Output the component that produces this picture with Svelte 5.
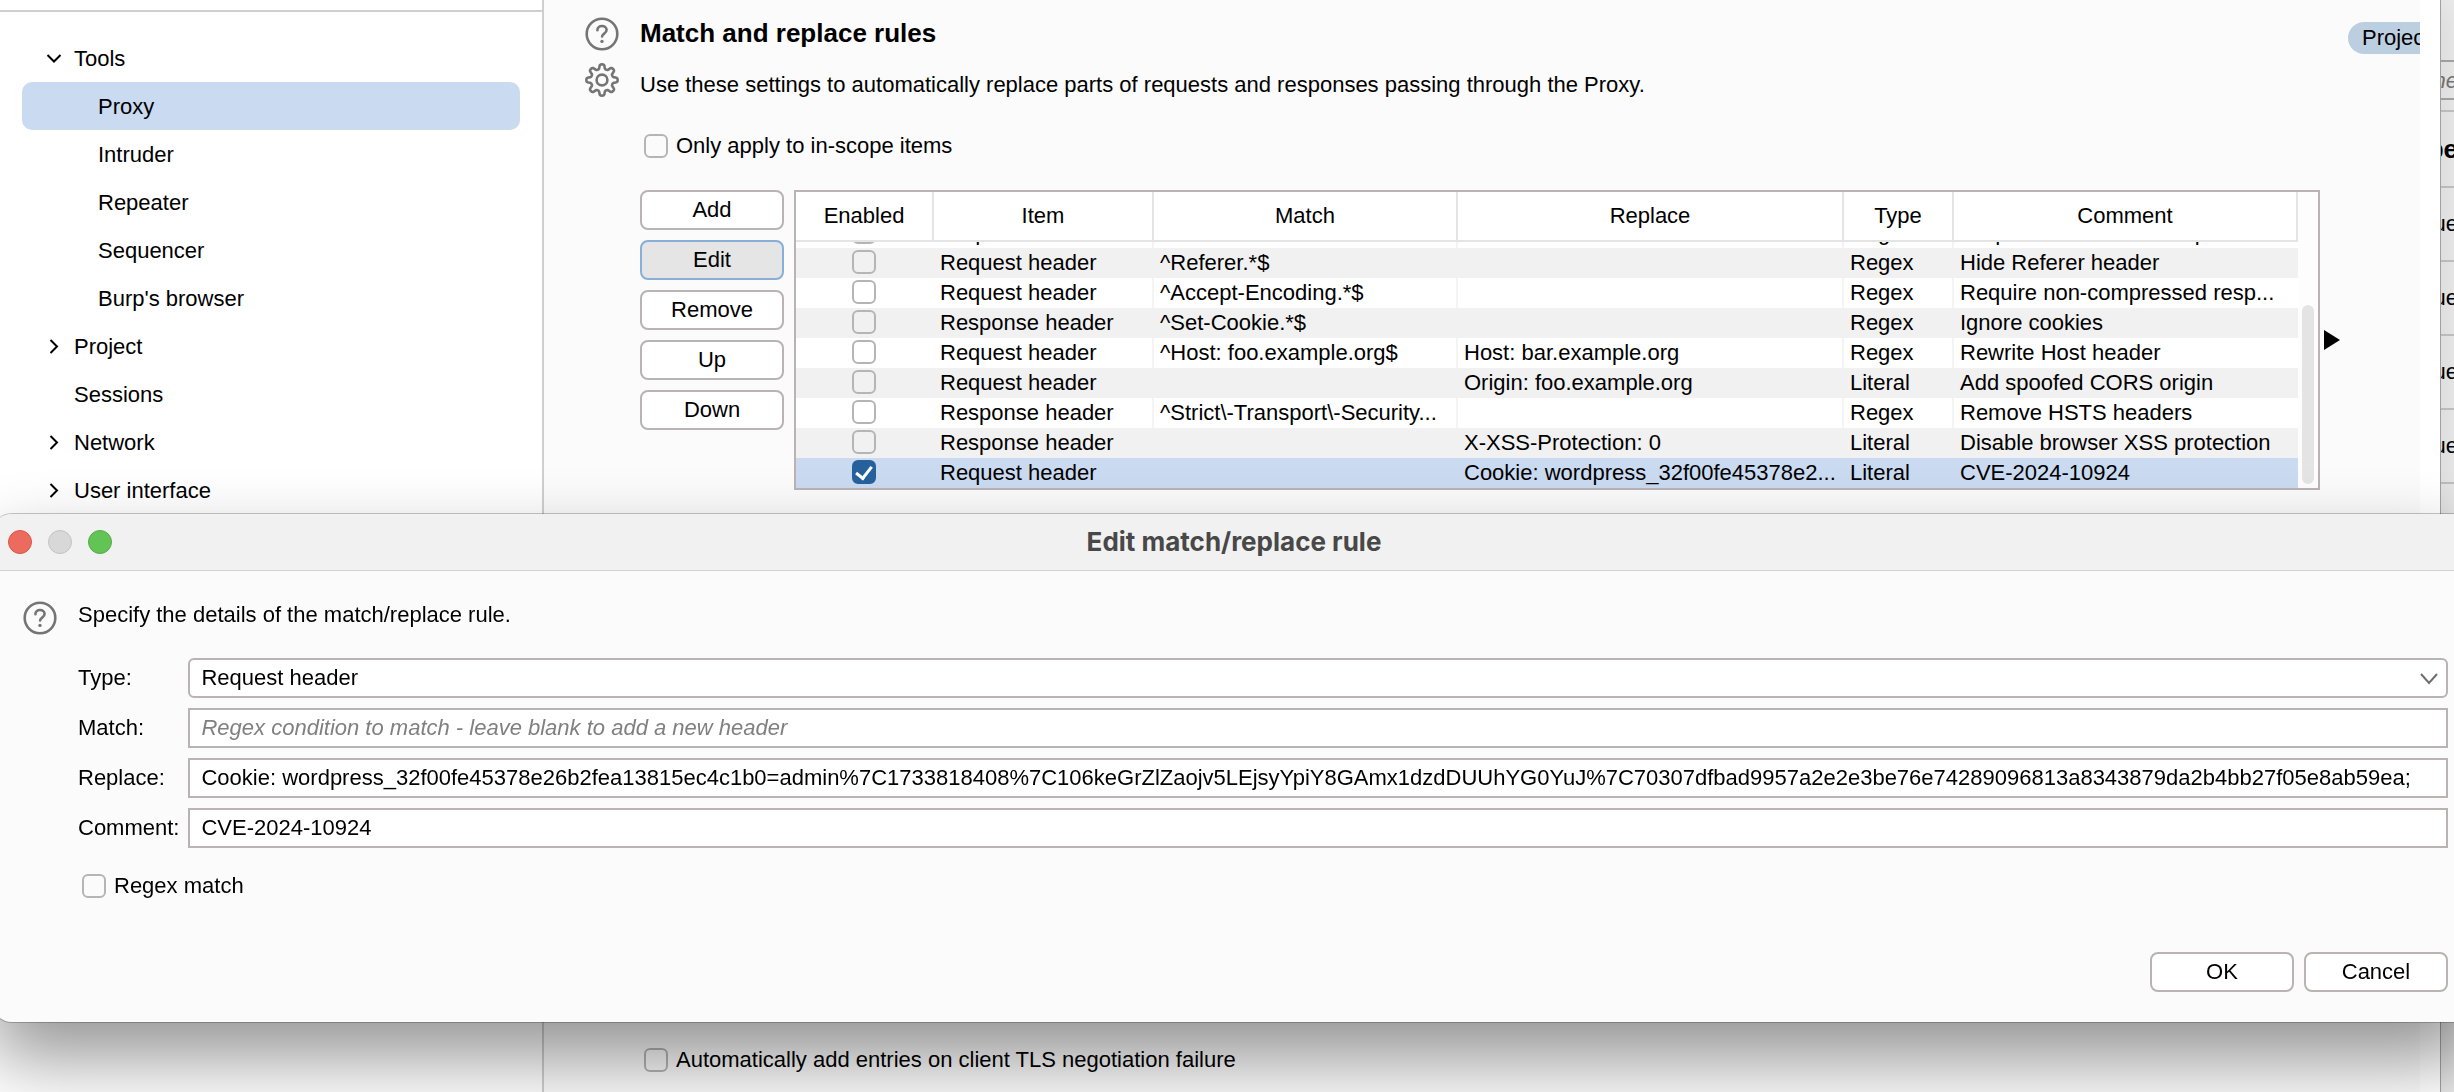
<script>
  const tree = [
    { label: 'Tools', level: 0, chevron: 'down' },
    { label: 'Proxy', level: 1, selected: true },
    { label: 'Intruder', level: 1 },
    { label: 'Repeater', level: 1 },
    { label: 'Sequencer', level: 1 },
    { label: "Burp's browser", level: 1 },
    { label: 'Project', level: 0, chevron: 'right' },
    { label: 'Sessions', level: 0 },
    { label: 'Network', level: 0, chevron: 'right' },
    { label: 'User interface', level: 0, chevron: 'right' },
  ];

  const actions = ['Add', 'Edit', 'Remove', 'Up', 'Down'];

  const columns = ['Enabled', 'Item', 'Match', 'Replace', 'Type', 'Comment'];

  let rules = $state([
    { on: false, item: 'Request header', match: '^If-None-Match.*$', replace: '', type: 'Regex', comment: 'Require non-cached response' },
    { on: false, item: 'Request header', match: '^Referer.*$', replace: '', type: 'Regex', comment: 'Hide Referer header' },
    { on: false, item: 'Request header', match: '^Accept-Encoding.*$', replace: '', type: 'Regex', comment: 'Require non-compressed resp...' },
    { on: false, item: 'Response header', match: '^Set-Cookie.*$', replace: '', type: 'Regex', comment: 'Ignore cookies' },
    { on: false, item: 'Request header', match: '^Host: foo.example.org$', replace: 'Host: bar.example.org', type: 'Regex', comment: 'Rewrite Host header' },
    { on: false, item: 'Request header', match: '', replace: 'Origin: foo.example.org', type: 'Literal', comment: 'Add spoofed CORS origin' },
    { on: false, item: 'Response header', match: '^Strict\\-Transport\\-Security...', replace: '', type: 'Regex', comment: 'Remove HSTS headers' },
    { on: false, item: 'Response header', match: '', replace: 'X-XSS-Protection: 0', type: 'Literal', comment: 'Disable browser XSS protection' },
    { on: true, item: 'Request header', match: '', replace: 'Cookie: wordpress_32f00fe45378e2...', type: 'Literal', comment: 'CVE-2024-10924' },
  ]);

  let replaceText = $state(
    'Cookie: wordpress_32f00fe45378e26b2fea13815ec4c1b0=admin%7C1733818408%7C106keGrZlZaojv5LEjsyYpiY8GAmx1dzdDUUhYG0YuJ%7C70307dfbad9957a2e2e3be76e74289096813a8343879da2b4bb27f05e8ab59ea;'
  );

  // Eight-toothed gear outline, sampled around the circle.
  const gear = (() => {
    const pts = [];
    for (let i = 0; i < 160; i++) {
      const a = (i / 160) * Math.PI * 2;
      const r = 13.4 + 2.3 * Math.tanh(2 * Math.cos(8 * a));
      pts.push(`${(17 + r * Math.cos(a)).toFixed(2)} ${(17 + r * Math.sin(a)).toFixed(2)}`);
    }
    return `M${pts.join('L')}Z`;
  })();

  let scroller;
  $effect(() => {
    scroller.scrollTop = scroller.scrollHeight;
  });
</script>

{#snippet help()}
  <svg class="icon" viewBox="0 0 34 34" aria-hidden="true">
    <circle cx="17" cy="17" r="15.3" />
    <path d="M12.4 13.2C12.4 10.6 14.3 9 17 9s4.6 1.7 4.6 4.1c0 3.4-4.5 3.6-4.5 6.4" />
    <circle class="dot" cx="17" cy="24.4" r="1.7" />
  </svg>
{/snippet}

<div class="desktop">
  <div class="settings">
    <nav class="sidebar" aria-label="Settings">
      <div class="sidebar-top"></div>
      <ul>
        {#each tree as node}
          <li>
            <button class="node" class:child={node.level === 1} class:selected={node.selected}>
              <svg class="chevron" viewBox="0 0 16 16" aria-hidden="true">
                {#if node.chevron === 'down'}
                  <path d="M1.5 4 8 10.5 14.5 4" />
                {:else if node.chevron === 'right'}
                  <path d="M4.5 1 11 7.5l-6.5 6.5" />
                {/if}
              </svg>
              {node.label}
            </button>
          </li>
        {/each}
      </ul>
    </nav>

    <main class="panel">
      <span class="pill">Project</span>
      <section class="rules">
        <div class="side-icons">
          {@render help()}
          <svg class="icon" viewBox="0 0 34 34" aria-hidden="true">
            <path d={gear} />
            <circle cx="17" cy="17" r="5.4" />
          </svg>
        </div>
        <div class="rules-body">
          <h2>Match and replace rules</h2>
          <p>Use these settings to automatically replace parts of requests and responses passing through the Proxy.</p>
          <label class="check"><input type="checkbox" />Only apply to in-scope items</label>
          <div class="editor">
            <div class="actions">
              {#each actions as action}
                <button class="btn" class:focused={action === 'Edit'}>{action}</button>
              {/each}
            </div>
            <div class="table-frame">
              <div class="scroller" bind:this={scroller}>
                <table>
                  <colgroup>
                    <col class="c-enabled" /><col class="c-item" /><col class="c-match" />
                    <col class="c-replace" /><col class="c-type" /><col />
                  </colgroup>
                  <thead>
                    <tr>
                      {#each columns as column}<th scope="col">{column}</th>{/each}
                    </tr>
                  </thead>
                  <tbody>
                    {#each rules as rule, i}
                      <tr class:selected={i === rules.length - 1}>
                        <td class="tick"><input type="checkbox" aria-label="Enabled" bind:checked={rule.on} /></td>
                        <td>{rule.item}</td>
                        <td>{rule.match}</td>
                        <td>{rule.replace}</td>
                        <td>{rule.type}</td>
                        <td>{rule.comment}</td>
                      </tr>
                    {/each}
                  </tbody>
                </table>
              </div>
              <div class="track"><div class="thumb"></div></div>
            </div>
            <svg class="expand" viewBox="0 0 16 20" aria-hidden="true"><path d="M0 0 16 10 0 20Z" /></svg>
          </div>
        </div>
      </section>
      <label class="check tls"><input type="checkbox" />Automatically add entries on client TLS negotiation failure</label>
    </main>
    <div class="gutter"></div>
  </div>

  <aside class="behind">
    <div class="filter">ne</div>
    <div class="list">
      <div class="cell head">pe</div>
      {#each [1, 2, 3, 4] as n (n)}
        <div class="cell">ue</div>
      {/each}
    </div>
  </aside>

  <div class="dialog" role="dialog" aria-labelledby="dialog-title">
    <header>
      <div class="lights">
        <button class="light red" aria-label="Close"></button>
        <button class="light grey" aria-label="Minimize"></button>
        <button class="light green" aria-label="Zoom"></button>
      </div>
      <h1 id="dialog-title">Edit match/replace rule</h1>
    </header>
    <div class="dialog-body">
      {@render help()}
      <form onsubmit={(e) => e.preventDefault()}>
        <p>Specify the details of the match/replace rule.</p>
        <div class="fields">
          <label for="type">Type:</label>
          <div class="select">
            <select id="type"><option>Request header</option><option>Response header</option></select>
            <svg viewBox="0 0 18 12" aria-hidden="true"><path d="M1 1 9 10l8-9" /></svg>
          </div>
          <label for="match">Match:</label>
          <input id="match" type="text" placeholder="Regex condition to match - leave blank to add a new header" />
          <label for="replace">Replace:</label>
          <input id="replace" type="text" bind:value={replaceText} />
          <label for="comment">Comment:</label>
          <input id="comment" type="text" value="CVE-2024-10924" />
        </div>
        <label class="check"><input type="checkbox" />Regex match</label>
        <footer>
          <button class="btn" type="submit">OK</button>
          <button class="btn" type="button">Cancel</button>
        </footer>
      </form>
    </div>
  </div>
</div>

<style>
  :global(body) {
    margin: 0;
  }

  .desktop,
  .desktop * {
    box-sizing: border-box;
  }

  .desktop {
    position: relative;
    display: flex;
    height: 100vh;
    overflow: hidden;
    background: #ececec;
    color: #000;
    font: 22px/30px 'Liberation Sans', Arial, sans-serif;
  }

  button,
  input,
  select {
    margin: 0;
    color: inherit;
    font: inherit;
  }

  h1,
  h2,
  p,
  ul {
    margin: 0;
    padding: 0;
  }

  /* Settings window */
  .settings {
    flex: 1;
    display: flex;
    min-width: 0;
    background: #fff;
    z-index: 1;
    box-shadow: 0 0 0 1px #a0a0a0, 0 0 40px rgb(0 0 0 / 12%);
  }

  .gutter {
    width: 20px;
  }

  .sidebar {
    width: 544px;
    border-right: 2px solid #cfcfcf;
  }

  .sidebar-top {
    height: 12px;
    border-bottom: 2px solid #cfcfcf;
  }

  .sidebar ul {
    padding: 22px 22px 0;
    list-style: none;
  }

  .node {
    display: flex;
    align-items: center;
    gap: 12px;
    width: 100%;
    height: 48px;
    padding: 2px 24px 0;
    border: 0;
    border-radius: 10px;
    background: none;
    text-align: left;
  }

  .node.child {
    padding-left: 48px;
  }

  .node.selected {
    background: #cadaf1;
  }

  .chevron {
    width: 16px;
    height: 16px;
    fill: none;
    stroke: #000;
    stroke-width: 2;
  }

  .panel {
    position: relative;
    flex: 1;
    display: flex;
    flex-direction: column;
    justify-content: space-between;
    min-width: 0;
    padding: 17px 80px 17px 41px;
    background: #fbfbfb;
  }

  .pill {
    position: absolute;
    top: 22px;
    right: 0;
    width: 72px;
    height: 32px;
    padding-left: 14px;
    overflow: hidden;
    border-radius: 16px 0 0 16px;
    background: #bccfe1;
    line-height: 32px;
  }

  .rules {
    display: flex;
    gap: 21px;
  }

  .side-icons {
    display: flex;
    flex-direction: column;
    gap: 12px;
  }

  .icon {
    flex: none;
    width: 34px;
    height: 34px;
    fill: none;
    stroke: #757575;
    stroke-width: 2.6;
    stroke-linecap: round;
    stroke-linejoin: round;
  }

  .icon .dot {
    fill: #757575;
    stroke: none;
  }

  .rules-body {
    flex: 1;
    min-width: 0;
  }

  h2 {
    font-size: 26px;
    line-height: 32px;
  }

  .rules-body p {
    margin-top: 21px;
  }

  .check {
    display: flex;
    align-items: center;
    gap: 8px;
    padding-left: 4px;
  }

  .rules-body .check {
    margin-top: 31px;
  }

  input[type='checkbox'] {
    appearance: none;
    flex: none;
    width: 24px;
    height: 24px;
    border: 2px solid #b5b5b5;
    border-radius: 6px;
    background: transparent;
  }

  input[type='checkbox']:checked {
    place-items: center;
    border-color: #26619c;
    background: #26619c;
  }

  input[type='checkbox']:checked::before {
    content: '';
    width: 7px;
    height: 13px;
    margin-bottom: 3px;
    border: solid #fff;
    border-width: 0 3px 3px 0;
    rotate: 38deg;
  }

  .tls {
    padding-left: 59px;
  }

  .editor {
    display: flex;
    margin-top: 29px;
  }

  .actions {
    display: flex;
    flex-direction: column;
    gap: 10px;
    margin-right: 10px;
  }

  .btn {
    width: 144px;
    height: 40px;
    padding: 0;
    border: 2px solid #b9b3b3;
    border-radius: 8px;
    background: #fff;
  }

  .btn.focused {
    border-color: #87afda;
    background: #e5e5e5;
  }

  .table-frame {
    flex: 1;
    display: flex;
    min-width: 0;
    height: 300px;
    border: 2px solid #b9b3b3;
    background: #fdfdfd;
  }

  .scroller {
    flex: 1;
    min-width: 0;
    overflow: hidden;
    background: #fff;
  }

  table {
    width: 100%;
    table-layout: fixed;
    border-spacing: 0;
  }

  .c-enabled { width: 138px; }
  .c-item { width: 220px; }
  .c-match { width: 304px; }
  .c-replace { width: 386px; }
  .c-type { width: 110px; }

  th {
    position: sticky;
    top: 0;
    z-index: 1;
    height: 50px;
    padding: 0;
    border-right: 2px solid #e4e4e4;
    border-bottom: 2px solid #e4e4e4;
    background: #fff;
    font-weight: 400;
  }

  td {
    height: 30px;
    padding: 0 0 0 6px;
    border-right: 2px solid #f4f4f4;
    overflow: hidden;
    line-height: 30px;
    white-space: nowrap;
  }

  td:last-child,
  td.tick,
  tr:nth-child(even) td,
  tr.selected td {
    border-color: transparent;
  }

  td.tick {
    padding: 0;
  }

  .tick input[type='checkbox'] {
    display: grid;
    margin: 2px auto 4px;
  }

  tbody tr:nth-child(even) {
    background: #f1f1f1;
  }

  tbody tr.selected {
    background: #cadaf1;
  }

  .track {
    display: flex;
    flex-direction: column;
    justify-content: flex-end;
    width: 20px;
    padding: 4px;
  }

  .thumb {
    height: 62%;
    border-radius: 6px;
    background: #e4e4e4;
  }

  .expand {
    flex: none;
    align-self: center;
    width: 16px;
    height: 20px;
    margin-left: 4px;
  }

  /* Window seen behind the settings window */
  .behind {
    width: 14px;
    padding-top: 60px;
    overflow: hidden;
  }

  .filter {
    display: flex;
    justify-content: flex-end;
    height: 40px;
    margin-right: -4px;
    border: solid #aaa6a6;
    border-width: 2px 0;
    color: #777;
    font-style: italic;
    line-height: 38px;
  }

  .list {
    margin-top: 10px;
    margin-right: -4px;
    border-top: 2px solid #c4c4c4;
  }

  .cell {
    display: flex;
    align-items: center;
    justify-content: flex-end;
    height: 74px;
    border-bottom: 2px solid #c4c4c4;
  }

  .cell.head {
    height: 76px;
    font-size: 26px;
    font-weight: 700;
  }

  /* Rule dialog */
  .dialog {
    position: absolute;
    z-index: 2;
    top: 514px;
    left: -8px;
    right: -22px;
    border-radius: 20px;
    background: #fbfbfb;
    box-shadow: 0 0 0 1px rgb(0 0 0 / 22%), 0 36px 72px rgb(0 0 0 / 42%);
  }

  header {
    display: grid;
    grid-template-columns: 1fr auto 1fr;
    align-items: center;
    height: 57px;
    padding: 0 16px;
    border-bottom: 1px solid #d2d2d2;
    border-radius: 20px 20px 0 0;
    background: #f1f1f1;
  }

  .lights {
    display: flex;
    gap: 16px;
  }

  .light {
    width: 24px;
    height: 24px;
    padding: 0;
    border: 1px solid #d9564b;
    border-radius: 50%;
    background: #ec6a5e;
  }

  .light.grey {
    border-color: #c3c3c3;
    background: #d8d8d8;
  }

  .light.green {
    border-color: #56ab46;
    background: #61c454;
  }

  h1 {
    color: #484848;
    font: 700 26px/32px Inter, sans-serif;
  }

  .dialog-body {
    display: flex;
    align-items: flex-start;
    gap: 21px;
    padding: 30px 28px 30px 31px;
  }

  form {
    flex: 1;
    min-width: 0;
  }

  form p {
    line-height: 28px;
  }

  .fields {
    display: grid;
    grid-template-columns: auto 1fr;
    align-items: center;
    gap: 10px 9px;
    margin-top: 29px;
    margin-bottom: 23px;
  }

  .select {
    position: relative;
  }

  .select svg {
    position: absolute;
    top: 15px;
    right: 10px;
    width: 18px;
    height: 12px;
    fill: none;
    stroke: #6e6e6e;
    stroke-width: 2;
    pointer-events: none;
  }

  select,
  input[type='text'] {
    display: block;
    width: 100%;
    height: 40px;
    padding: 0 11px;
    border: 2px solid #b9b3b3;
    border-radius: 0;
    background: #fff;
  }

  select {
    appearance: none;
    border-radius: 6px;
  }

  ::placeholder {
    color: #808080;
    font-style: italic;
    opacity: 1;
  }

  footer {
    display: flex;
    justify-content: flex-end;
    gap: 10px;
    margin-top: 51px;
  }
</style>
